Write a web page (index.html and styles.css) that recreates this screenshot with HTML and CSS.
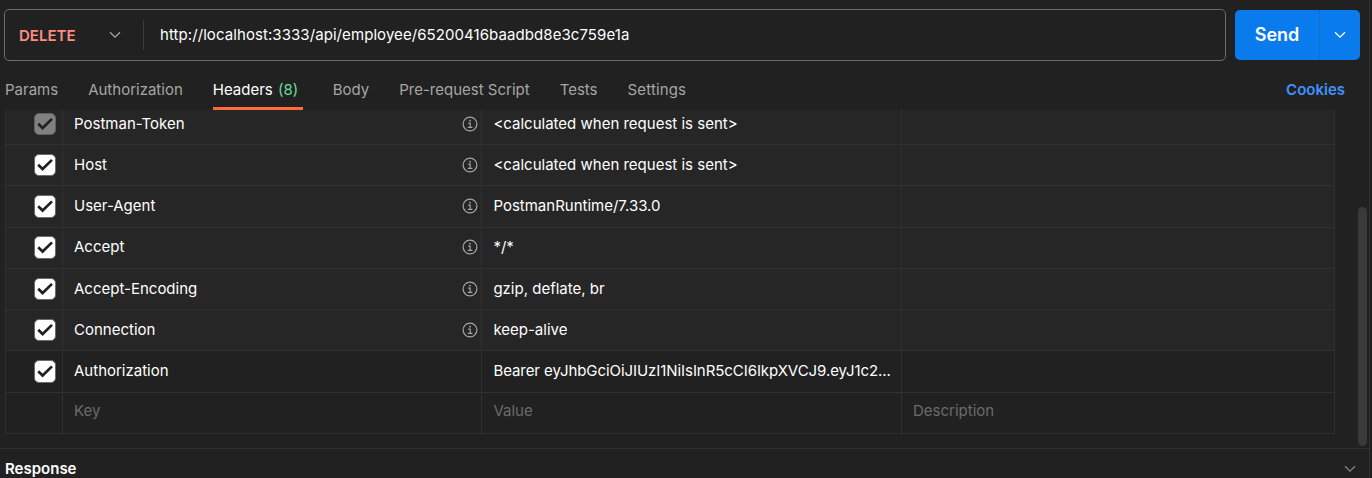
FILE: index.html
```html
<!DOCTYPE html>
<html lang="en">
<head>
<meta charset="utf-8">
<title>Request</title>
<link rel="stylesheet" href="styles.css">
</head>
<body>
<svg class="defs" width="0" height="0">
  <symbol id="info" viewBox="0 0 16 16"><circle cx="8" cy="8" r="6.9" fill="none" stroke="currentColor" stroke-width="1.2"/><path d="M6.2 7.1H8.2V11.2M5.8 11.4H10.4" fill="none" stroke="currentColor" stroke-width="1.1"/><circle cx="8" cy="4.7" r=".85" fill="currentColor"/></symbol>
  <symbol id="tick" viewBox="0 0 20 20"><path d="M3.2 9.7L7.6 14L17 4.9" fill="none" stroke="currentColor" stroke-width="2.7"/></symbol>
  <symbol id="chev" viewBox="0 0 12 8"><path d="M1 1.2L6 6.2L11 1.2" fill="none" stroke="currentColor" stroke-width="1.25"/></symbol>
</svg>
<main class="pane">
  <div class="request">
    <div class="urlbar">
      <div class="method"><span>DELETE</span><svg class="chev"><use href="#chev"/></svg></div>
      <div class="url">http://localhost:3333/api/employee/65200416baadbd8e3c759e1a</div>
    </div>
    <div class="send"><span class="send-label">Send</span><span class="send-more"><svg class="chev"><use href="#chev"/></svg></span></div>
  </div>
  <nav class="tabs">
    <span class="tab">Params</span>
    <span class="tab">Authorization</span>
    <span class="tab active">Headers <span class="count">(8)</span></span>
    <span class="tab">Body</span>
    <span class="tab">Pre-request Script</span>
    <span class="tab">Tests</span>
    <span class="tab settings">Settings</span>
    <span class="cookies">Cookies</span>
  </nav>
  <div class="content">
    <div class="table">
      <div class="row auto"><div class="check"><svg class="box locked"><use href="#tick"/></svg></div><div class="key">Postman-Token<svg class="info"><use href="#info"/></svg></div><div class="value">&lt;calculated when request is sent&gt;</div><div class="desc"></div></div>
      <div class="row auto"><div class="check"><svg class="box"><use href="#tick"/></svg></div><div class="key">Host<svg class="info"><use href="#info"/></svg></div><div class="value">&lt;calculated when request is sent&gt;</div><div class="desc"></div></div>
      <div class="row auto"><div class="check"><svg class="box tall"><use href="#tick"/></svg></div><div class="key">User-Agent<svg class="info"><use href="#info"/></svg></div><div class="value">PostmanRuntime/7.33.0</div><div class="desc"></div></div>
      <div class="row auto raised"><div class="check"><svg class="box tall"><use href="#tick"/></svg></div><div class="key">Accept<svg class="info"><use href="#info"/></svg></div><div class="value">*/*</div><div class="desc"></div></div>
      <div class="row auto"><div class="check"><svg class="box"><use href="#tick"/></svg></div><div class="key">Accept-Encoding<svg class="info"><use href="#info"/></svg></div><div class="value">gzip, deflate, br</div><div class="desc"></div></div>
      <div class="row auto"><div class="check"><svg class="box"><use href="#tick"/></svg></div><div class="key">Connection<svg class="info"><use href="#info"/></svg></div><div class="value">keep-alive</div><div class="desc"></div></div>
      <div class="row"><div class="check"><svg class="box tall"><use href="#tick"/></svg></div><div class="key">Authorization</div><div class="value token">Bearer eyJhbGciOiJIUzI1NiIsInR5cCI6IkpXVCJ9.eyJ1c2...</div><div class="desc"></div></div>
      <div class="row empty"><div class="check"></div><div class="key">Key</div><div class="value">Value</div><div class="desc">Description</div></div>
    </div>
    <div class="scrollbar"></div>
  </div>
  <footer class="response"><span>Response</span><svg class="chev"><use href="#chev"/></svg></footer>
</main>
</body>
</html>
```

FILE: styles.css
```css
* { box-sizing: border-box; }
body {
  margin: 0;
  height: 478px;
  overflow: hidden;
  background: #212121;
  color: #fff;
  font: 15px/20px Inter, "Liberation Sans", sans-serif;
  white-space: nowrap;
}
.defs { display: block; }
.pane { width: 1370px; height: 478px; border-right: 1px solid #303030; }
.chev { width: 12px; height: 8px; flex: none; }

.request { display: flex; gap: 9px; padding: 9px 0 0 4px; height: 61px; }
.urlbar { display: flex; align-items: center; width: 1222px; border: 1px solid #6b6b6b; border-radius: 5px; }
.method {
  display: flex; align-items: center; justify-content: space-between;
  width: 139px; height: 30px; padding: 0 22px 0 14px;
  border-right: 1px solid #3b3b3b;
  color: #ff8e7f; font-weight: 600;
}
.method span { padding-top: 1px; }
.method .chev { color: #a6a6a6; }
.url { padding-left: 16px; letter-spacing: .075px; }
.send { display: flex; width: 125px; height: 50px; margin-top: 1px; border-radius: 5px; background: #097bed; }
.send-label { display: flex; align-items: center; justify-content: center; width: 84px; font-size: 18px; font-weight: 600; }
.send-more { display: flex; align-items: center; justify-content: center; flex: 1; border-left: 1px solid #0a6fd6; }

.tabs { display: flex; gap: 30px; height: 49px; padding: 19px 24px 0 5px; color: #a6a6a6; }
.tab { height: 30px; }
.active { width: 90px; color: #fff; border-bottom: 3px solid #ff6c37; }
.count { margin-left: 1px; color: #6bdd9a; }
.settings { letter-spacing: .15px; }
.cookies { margin-left: auto; color: #4092ff; font-weight: 600; }

.content { display: flex; justify-content: space-between; height: 338px; padding: 0 2px 0 5px; overflow: hidden; }
.table { width: 1330px; height: 324px; border-left: 1px solid #303030; display: grid; grid-template-rows: 35px 41px 42px 41px 41px 41px 42px 41px; }
.row { display: grid; grid-template-columns: 57px 419px 420px 433px; align-items: stretch; }
.row > div { display: flex; align-items: flex-start; border-right: 1px solid #303030; border-bottom: 1px solid #303030; padding: 10px 0 0 11px; }
.row:first-child > div { padding-top: 4px; }
.auto { background: #262626; }
.row > .check { padding-left: 28px; padding-top: 9px; }
.row:first-child > .check { padding-top: 3px; }
.row > .key { justify-content: space-between; padding-right: 3.5px; }
.row > .value { padding-left: 11.4px; }
.row.raised > div { padding-top: 9px; }
.row.raised > .check { padding-top: 8px; }
.info { width: 16px; height: 16px; margin-top: 1.5px; color: #a6a6a6; }
.box { width: 22px; height: 22px; border: 1px solid #6b6b6b; border-radius: 5px; background: #fff; color: #212121; }
.tall { height: 23px; }
.locked { background: #808080; border-color: #606060; }
.row.empty > div { color: #6b6b6b; padding-top: 8px; }
.value.token { letter-spacing: -.065px; }
.scrollbar { width: 9px; height: 239px; margin-top: 97px; border-radius: 5px; background: #3a3a3a; }

.response { display: flex; align-items: center; justify-content: space-between; height: 41px; padding: 0 13px 0 5px; border-top: 1px solid #303030; font-weight: 600; }
.response .chev { color: #858585; }
```
